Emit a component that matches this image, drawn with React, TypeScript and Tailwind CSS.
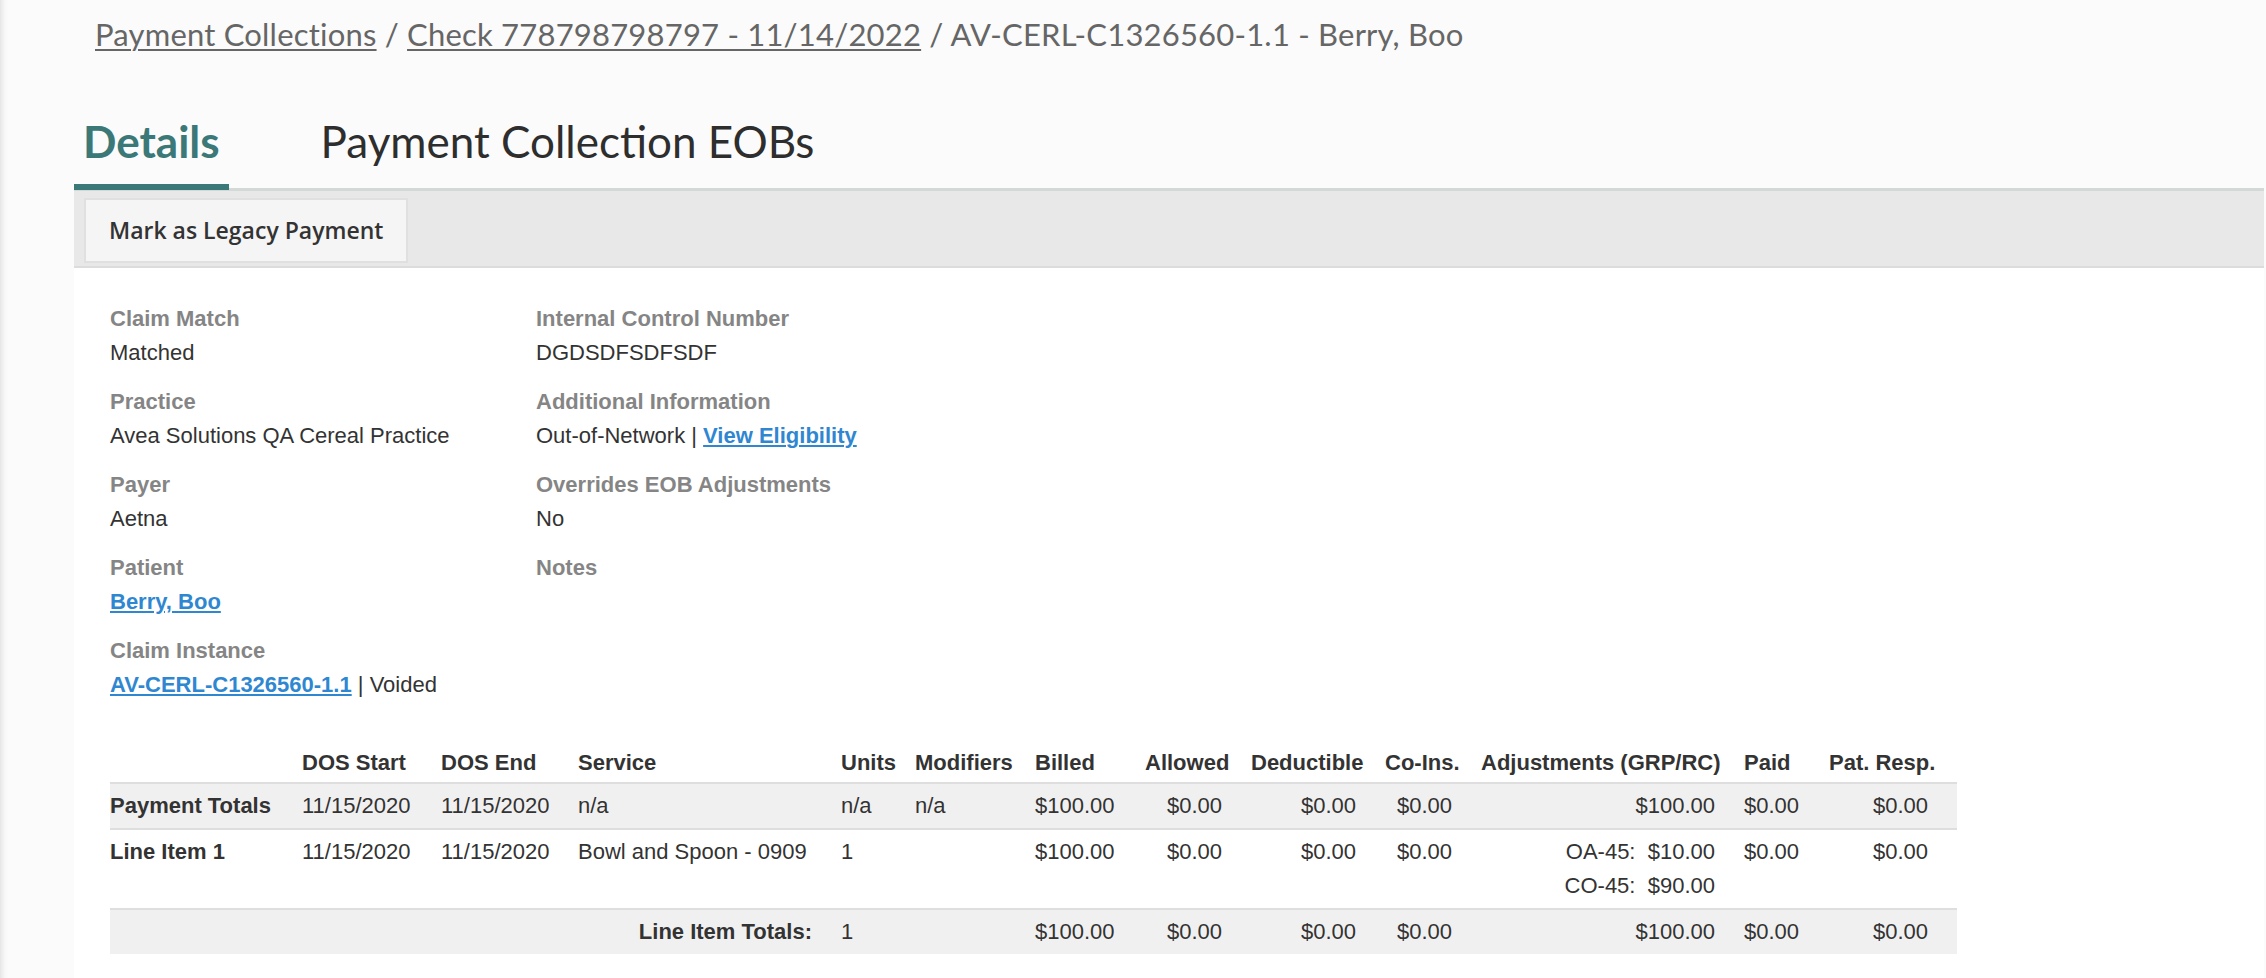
import React from "react";

type Field = {
    label: string;
    value?: React.ReactNode;
};

const linkCls = "font-bold text-[#2f87d1] underline underline-offset-2 decoration-2";

const leftFields: Field[] = [
    { label: "Claim Match", value: "Matched" },
    { label: "Practice", value: "Avea Solutions QA Cereal Practice" },
    { label: "Payer", value: "Aetna" },
    { label: "Patient", value: <a className={linkCls}>Berry, Boo</a> },
    {
        label: "Claim Instance",
        value: (
            <>
                <a className={linkCls}>AV-CERL-C1326560-1.1</a> | Voided
            </>
        ),
    },
];

const rightFields: Field[] = [
    { label: "Internal Control Number", value: "DGDSDFSDFSDF" },
    {
        label: "Additional Information",
        value: (
            <>
                Out-of-Network | <a className={linkCls}>View Eligibility</a>
            </>
        ),
    },
    { label: "Overrides EOB Adjustments", value: "No" },
    { label: "Notes" },
];

function FieldBlock({ label, value }: Field) {
    return (
        <div className="mb-[15px]">
            <div className="text-[22px] leading-[34px] font-bold text-[#858585]">{label}</div>
            <div className="text-[22px] leading-[34px] text-[#333] min-h-[34px]">{value}</div>
        </div>
    );
}

// column widths of the line item table, left to right
const colWidths = [192, 139, 137, 263, 74, 120, 110, 106, 134, 96, 263, 85, 128];

const headers = [
    "",
    "DOS Start",
    "DOS End",
    "Service",
    "Units",
    "Modifiers",
    "Billed",
    "Allowed",
    "Deductible",
    "Co-Ins.",
    "Adjustments (GRP/RC)",
    "Paid",
    "Pat. Resp.",
];

const cell = "py-[5px] pr-[29px] align-top whitespace-nowrap";
const num = cell + " text-right";

function LineItemTable() {
    return (
        <table className="table-fixed border-collapse w-[1847px] mt-[25px] text-[22px] leading-[34px] text-[#333]">
            <colgroup>
                {colWidths.map((w, i) => (
                    <col key={i} style={{ width: w }} />
                ))}
            </colgroup>
            <thead>
                <tr className="border-b-2 border-[#dedede]">
                    {headers.map((h, i) => (
                        <th key={i} className="pt-[4px] pb-[2px] text-left font-bold whitespace-nowrap">
                            {h}
                        </th>
                    ))}
                </tr>
            </thead>
            <tbody>
                <tr className="bg-[#f1f0f0] border-b-2 border-[#dedede]">
                    <td className={cell + " font-bold"}>Payment Totals</td>
                    <td className={cell}>11/15/2020</td>
                    <td className={cell}>11/15/2020</td>
                    <td className={cell}>n/a</td>
                    <td className={cell}>n/a</td>
                    <td className={cell}>n/a</td>
                    <td className={cell}>$100.00</td>
                    <td className={num}>$0.00</td>
                    <td className={num}>$0.00</td>
                    <td className={num}>$0.00</td>
                    <td className={num}>$100.00</td>
                    <td className={cell}>$0.00</td>
                    <td className={num}>$0.00</td>
                </tr>
                <tr className="border-b-2 border-[#dedede]">
                    <td className={cell + " font-bold"}>Line Item 1</td>
                    <td className={cell}>11/15/2020</td>
                    <td className={cell}>11/15/2020</td>
                    <td className={cell}>Bowl and Spoon - 0909</td>
                    <td className={cell}>1</td>
                    <td className={cell}></td>
                    <td className={cell}>$100.00</td>
                    <td className={num}>$0.00</td>
                    <td className={num}>$0.00</td>
                    <td className={num}>$0.00</td>
                    <td className={num}>
                        <div>OA-45:&nbsp; $10.00</div>
                        <div>CO-45:&nbsp; $90.00</div>
                    </td>
                    <td className={cell}>$0.00</td>
                    <td className={num}>$0.00</td>
                </tr>
                <tr className="bg-[#f1f0f0]">
                    <td colSpan={4} className={num + " font-bold"}>
                        Line Item Totals:
                    </td>
                    <td className={cell}>1</td>
                    <td className={cell}></td>
                    <td className={cell}>$100.00</td>
                    <td className={num}>$0.00</td>
                    <td className={num}>$0.00</td>
                    <td className={num}>$0.00</td>
                    <td className={num}>$100.00</td>
                    <td className={cell}>$0.00</td>
                    <td className={num}>$0.00</td>
                </tr>
            </tbody>
        </table>
    );
}

export default function App() {
    return (
        <div className="min-h-screen bg-[linear-gradient(to_right,#e6e6e6,#f8f8f8_5px,#fbfbfb_9px)] font-['Liberation_Sans',Arial,sans-serif]">
            <div className="pl-[74px] pr-[2px]">
                {/* breadcrumb */}
                <div className="pl-[21px] pt-[16px] font-['Lato',sans-serif] text-[31px] leading-[36px] tracking-[0.2px] text-[#666] whitespace-nowrap">
                    <a className="underline decoration-2 underline-offset-[3px]">Payment Collections</a>
                    {" / "}
                    <a className="underline decoration-2 underline-offset-[3px]">Check 778798798797 - 11/14/2022</a>
                    {" / "}
                    <span>AV-CERL-C1326560-1.1 - Berry, Boo</span>
                </div>

                {/* tabs */}
                <div className="mt-[63px] flex border-b-[3px] border-[#d3d9d7] font-['Lato',sans-serif] text-[44px] leading-[53px]">
                    <div className="px-[9px] pb-[16px] border-b-[6px] border-[#3b7878] -mb-[2px] font-bold text-[#3b7878]">
                        Details
                    </div>
                    <div className="ml-[80px] px-[12px] pb-[16px] text-[#2e2e2e]">Payment Collection EOBs</div>
                </div>

                {/* toolbar */}
                <div className="bg-[#e8e8e8] border-b-2 border-[#dcdcdc] pl-[10px] pt-[7px] pb-[3px]">
                    <button className="h-[65px] px-[23px] border-2 border-[#e0e0e0] bg-[#f5f5f5] font-['Open_Sans',sans-serif] font-semibold text-[23px] text-[#333]">
                        Mark as Legacy Payment
                    </button>
                </div>

                {/* details panel */}
                <div className="bg-white pl-[36px] pt-[34px] pb-[24px]">
                    <div className="flex">
                        <div className="w-[426px]">
                            {leftFields.map((f) => (
                                <FieldBlock key={f.label} {...f} />
                            ))}
                        </div>
                        <div>
                            {rightFields.map((f) => (
                                <FieldBlock key={f.label} {...f} />
                            ))}
                        </div>
                    </div>
                    <LineItemTable />
                </div>
            </div>
        </div>
    );
}
